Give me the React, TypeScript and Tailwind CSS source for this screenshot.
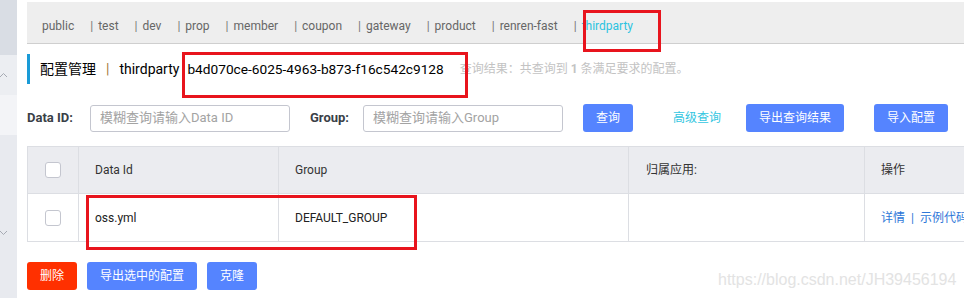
import React from "react";

const tabs = ["public", "test", "dev", "prop", "member", "coupon", "gateway", "product", "renren-fast", "thirdparty"];

function Checkbox() {
  return <span className="block w-4 h-4 bg-white border border-[#c4c6cf] rounded-[3px]" />;
}

function Chevron({ up }: { up?: boolean }) {
  return (
    <svg width="9" height="6" viewBox="0 0 9 6" className="ml-[-1px]">
      <polyline
        points={up ? "1,5 4.5,1.5 8,5" : "1,1 4.5,4.5 8,1"}
        fill="none"
        stroke="#a6aab3"
        strokeWidth="1"
      />
    </svg>
  );
}

export default function App() {
  return (
    <div
      className="relative flex w-[964px] h-[298px] overflow-hidden bg-white text-[12px] text-[#333]"
      style={{ fontFamily: 'Roboto, "Noto Sans CJK SC", sans-serif' }}
    >
      {/* sidebar strip */}
      <div className="w-[17px] shrink-0 flex flex-col">
        <div className="h-[55px] bg-[#d9dde4]" />
        <div className="h-[40px] bg-[#eceef2] flex items-center">
          <Chevron up />
        </div>
        <div className="h-[40px] bg-[#f3f4f7]" />
        <div className="flex-1 bg-[#e8eaef] pt-[95px]">
          <Chevron />
        </div>
      </div>

      {/* main */}
      <div className="flex-1 min-w-0 pl-[10px] pt-[2px] flex flex-col">
        <div className="h-[42px] bg-[#eeeeee] border-b border-[#cfcfcf] flex items-center pl-[15px] pt-[6px] text-[12px] text-[#666] whitespace-nowrap">
          {tabs.map((t, i) => (
            <React.Fragment key={t}>
              {i > 0 && <span className="ml-4 mr-[5px] text-[#777]">|</span>}
              <span className={t === "thirdparty" ? "text-[#2cc3e0]" : ""}>{t}</span>
            </React.Fragment>
          ))}
        </div>

        <div className="mt-[10px] h-[30px] border-l-[3px] border-[#1a9bd7] flex items-center pl-[10px] whitespace-nowrap">
          <span className="text-[14px] text-black">配置管理</span>
          <span className="mx-[10px] text-[14px] text-[#a87a3c]">|</span>
          <span className="text-[14px] text-black">thirdparty</span>
          <span className="ml-[8px] text-[13.7px] text-black">b4d070ce-6025-4963-b873-f16c542c9128</span>
          <span className="ml-[16px] text-[12px] text-[#c3c3c3]">
            查询结果：共查询到 <b>1</b> 条满足要求的配置。
          </span>
        </div>

        <div className="mt-[20px] h-[28px] flex items-center whitespace-nowrap">
          <span className="w-[63px] text-[13px] font-bold text-[#3a3f47]">Data ID:</span>
          <div className="w-[200px] h-[27px] border border-[#c4c6cf] rounded-[3px] flex items-center pl-[9px] text-[13px] text-[#a3a3a3]">
            模糊查询请输入Data ID
          </div>
          <span className="ml-[20px] w-[53px] text-[13px] font-bold text-[#3a3f47]">Group:</span>
          <div className="w-[200px] h-[27px] border border-[#c4c6cf] rounded-[3px] flex items-center pl-[9px] text-[13px] text-[#a3a3a3]">
            模糊查询请输入Group
          </div>
          <button className="ml-[20px] w-[50px] h-[28px] rounded-[3px] bg-[#5584ff] text-white text-[12px]">查询</button>
          <span className="ml-[40px] text-[12px] text-[#33c6e1]">高级查询</span>
          <button className="ml-[25px] w-[98px] h-[28px] rounded-[3px] bg-[#5584ff] text-white text-[12px]">导出查询结果</button>
          <button className="ml-[30px] w-[74px] h-[28px] rounded-[3px] bg-[#5584ff] text-white text-[12px]">导入配置</button>
        </div>

        <div className="mt-[14px] w-[1100px] border-l border-[#dcdee3]">
          <div className="h-[48px] flex bg-[#ebecf0] border-t border-b border-[#dcdee3]">
            <div className="w-[50px] flex items-center justify-center">
              <Checkbox />
            </div>
            <div className="w-[200px] border-l border-[#dcdee3] flex items-center pl-[16px]">Data Id</div>
            <div className="w-[350px] border-l border-[#dcdee3] flex items-center pl-[16px]">Group</div>
            <div className="w-[236px] border-l border-[#dcdee3] flex items-center pl-[17px]">归属应用:</div>
            <div className="flex-1 border-l border-[#dcdee3] flex items-center pl-[16px]">操作</div>
          </div>
          <div className="h-[48px] flex border-b border-[#dcdee3]">
            <div className="w-[50px] flex items-center justify-center">
              <Checkbox />
            </div>
            <div className="w-[200px] border-l border-[#dcdee3] flex items-center pl-[16px] text-[#222]">oss.yml</div>
            <div className="w-[350px] border-l border-[#dcdee3] flex items-center pl-[16px] text-[#222]">DEFAULT_GROUP</div>
            <div className="w-[236px] border-l border-[#dcdee3]" />
            <div className="flex-1 border-l border-[#dcdee3] flex items-center pl-[16px] text-[#2e77d8] whitespace-nowrap">
              详情<span className="mx-[6px]">|</span>示例代码
            </div>
          </div>
        </div>

        <div className="mt-[20px] h-[28px] flex items-center">
          <button className="w-[50px] h-[28px] rounded-[3px] bg-[#ff3000] text-white text-[12px]">删除</button>
          <button className="ml-[10px] w-[110px] h-[28px] rounded-[3px] bg-[#5584ff] text-white text-[12px]">导出选中的配置</button>
          <button className="ml-[10px] w-[50px] h-[28px] rounded-[3px] bg-[#5584ff] text-white text-[12px]">克隆</button>
        </div>
      </div>

      {/* watermark */}
      <div
        className="absolute left-[718px] top-[268px] text-[16px] text-[#e3e3e3] whitespace-nowrap"
        style={{ fontFamily: '"Liberation Sans", Arial, sans-serif' }}
      >
        https://blog.csdn.net/JH39456194
      </div>

      {/* red annotation boxes */}
      <div className="absolute left-[583px] top-[10px] w-[78px] h-[42px] border-[3px] border-[#e8141d]" />
      <div className="absolute left-[182px] top-[52px] w-[286px] h-[46px] border-[3px] border-[#e8141d]" />
      <div className="absolute left-[86px] top-[195px] w-[331px] h-[55px] border-[3px] border-[#e8141d]" />
    </div>
  );
}
